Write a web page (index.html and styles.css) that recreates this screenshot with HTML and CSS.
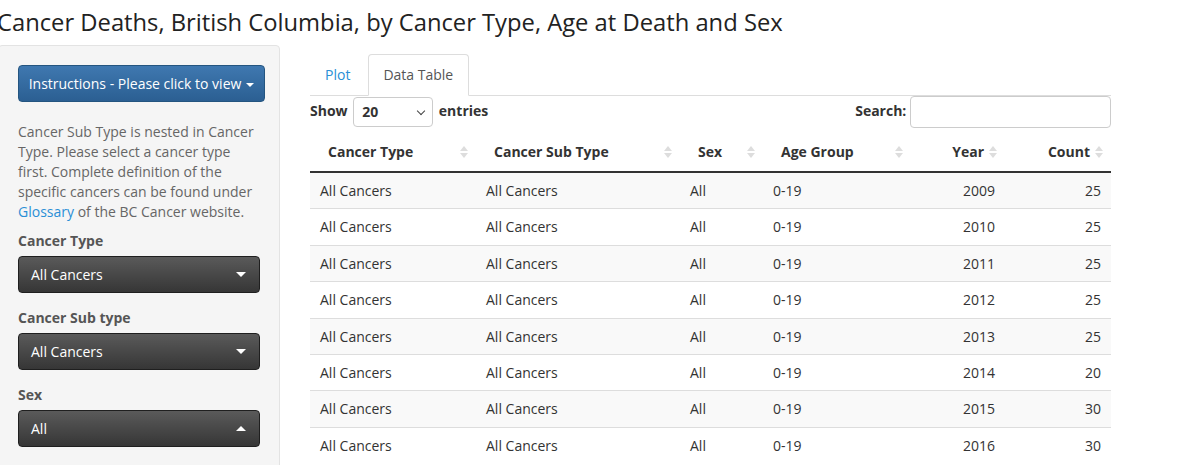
FILE: index.html
```html
<!DOCTYPE html>
<html lang="en">

<head>
    <meta charset="UTF-8">
    <meta name="viewport" content="width=device-width, initial-scale=1.0">
    <title>Cancer Deaths, British Columbia</title>
    <link rel="stylesheet" href="styles.css">
</head>

<body>
    <div class="page">
        <h2 class="title">Cancer Deaths, British Columbia, by Cancer Type, Age at Death and Sex</h2>

        <div class="layout">
            <!-- sidebar with filters -->
            <aside class="well">
                <button class="btn-primary">Instructions - Please click to view<span class="caret"></span></button>
                <p class="help">Cancer Sub Type is nested in Cancer Type. Please select a cancer type first. Complete definition of the specific cancers can be found under <a href="#">Glossary</a> of the BC Cancer website.</p>

                <div class="field">
                    <label>Cancer Type</label>
                    <div class="picker">All Cancers <span class="caret"></span></div>
                </div>
                <div class="field">
                    <label>Cancer Sub type</label>
                    <div class="picker">All Cancers <span class="caret"></span></div>
                </div>
                <div class="field">
                    <label>Sex</label>
                    <div class="picker">All <span class="caret up"></span></div>
                </div>
            </aside>

            <main class="content">
                <ul class="nav-tabs">
                    <li><a href="#">Plot</a></li>
                    <li class="active"><a href="#">Data Table</a></li>
                </ul>

                <div class="dt-top">
                    <div class="dt-length">Show <span class="len-select">20 <span class="chev"></span></span> entries</div>
                    <div class="dt-search">Search: <input type="text"></div>
                </div>

                <table class="data">
                    <colgroup>
                        <col style="width:166px">
                        <col style="width:204px">
                        <col style="width:83px">
                        <col style="width:148px">
                        <col style="width:94px">
                        <col style="width:106px">
                    </colgroup>
                    <thead>
                        <tr>
                            <th><div class="th">Cancer Type<span class="sort"></span></div></th>
                            <th><div class="th">Cancer Sub Type<span class="sort"></span></div></th>
                            <th><div class="th">Sex<span class="sort"></span></div></th>
                            <th><div class="th">Age Group<span class="sort"></span></div></th>
                            <th class="num"><div class="th">Year<span class="sort"></span></div></th>
                            <th class="num"><div class="th">Count<span class="sort"></span></div></th>
                        </tr>
                    </thead>
                    <tbody>
                        <tr><td>All Cancers</td><td>All Cancers</td><td>All</td><td>0-19</td><td class="num">2009</td><td class="num">25</td></tr>
                        <tr><td>All Cancers</td><td>All Cancers</td><td>All</td><td>0-19</td><td class="num">2010</td><td class="num">25</td></tr>
                        <tr><td>All Cancers</td><td>All Cancers</td><td>All</td><td>0-19</td><td class="num">2011</td><td class="num">25</td></tr>
                        <tr><td>All Cancers</td><td>All Cancers</td><td>All</td><td>0-19</td><td class="num">2012</td><td class="num">25</td></tr>
                        <tr><td>All Cancers</td><td>All Cancers</td><td>All</td><td>0-19</td><td class="num">2013</td><td class="num">25</td></tr>
                        <tr><td>All Cancers</td><td>All Cancers</td><td>All</td><td>0-19</td><td class="num">2014</td><td class="num">20</td></tr>
                        <tr><td>All Cancers</td><td>All Cancers</td><td>All</td><td>0-19</td><td class="num">2015</td><td class="num">30</td></tr>
                        <tr><td>All Cancers</td><td>All Cancers</td><td>All</td><td>0-19</td><td class="num">2016</td><td class="num">30</td></tr>
                    </tbody>
                </table>
            </main>
        </div>
    </div>
</body>

</html>
```

FILE: styles.css
```css
body {
    font-family: 'Open Sans', 'Liberation Sans', sans-serif;
    font-size: 14px;
    line-height: 20px;
    color: #333;
    margin: 0;
    background: #fff;
    overflow: hidden;
}

a {
    color: #2a8fd6;
    text-decoration: none;
}

.page {
    margin-left: -3px;
}

.title {
    font-size: 23.75px;
    font-weight: normal;
    line-height: 28px;
    margin: 8px 0 0;
    color: #222;
    white-space: nowrap;
}

.layout {
    display: flex;
    align-items: flex-start;
    margin-top: 9px;
    padding-left: 1px;
}

/* sidebar */
.well {
    width: 247px;
    min-height: 440px;
    padding: 19px 14px 19px 19px;
    background-color: #f5f5f5;
    border: 1px solid #e3e3e3;
    border-radius: 4px;
}

.btn-primary {
    display: block;
    width: 100%;
    height: 37px;
    font-family: inherit;
    font-size: 14px;
    color: #fff;
    background-image: linear-gradient(#3f78b0, #2b5f92);
    border: 1px solid #245580;
    border-radius: 4px;
    padding: 0 6px;
    text-align: center;
    white-space: nowrap;
}

.caret {
    display: inline-block;
    width: 0;
    height: 0;
    vertical-align: middle;
    border-top: 4px solid;
    border-right: 4px solid transparent;
    border-left: 4px solid transparent;
}

.btn-primary .caret {
    margin-left: 5px;
}

.caret.up {
    border-top: 0;
    border-bottom: 4px solid;
}

.help {
    max-width: 242px;
    color: #666;
    margin: 20px 0 9px;
}

.field {
    margin-bottom: 15px;
}

.field label {
    display: block;
    font-weight: bold;
    color: #555;
    margin-bottom: 5px;
}

.picker {
    display: flex;
    align-items: center;
    justify-content: space-between;
    height: 35px;
    margin-right: 5px;
    padding: 0 13px 0 12px;
    color: #fff;
    background-image: linear-gradient(#5a5a5a, #363636);
    border: 1px solid #1f1f1f;
    border-radius: 4px;
}

.picker .caret {
    border-width: 5px 5px 0;
}

.picker .caret.up {
    border-width: 0 5px 5px;
}

/* main panel */
.content {
    width: 801px;
    margin-left: 30px;
    padding-top: 9px;
}

.nav-tabs {
    display: flex;
    list-style: none;
    margin: 0;
    padding: 0;
    border-bottom: 1px solid #ddd;
}

.nav-tabs li {
    margin-right: 2px;
    margin-bottom: -1px;
}

.nav-tabs a {
    display: block;
    padding: 10px 15px 10px 14px;
    border: 1px solid transparent;
    border-radius: 4px 4px 0 0;
}

.nav-tabs .active a {
    color: #555;
    background: #fff;
    border-color: #ddd #ddd transparent;
}

.dt-top {
    display: flex;
    justify-content: space-between;
    align-items: center;
    height: 32px;
    font-weight: bold;
}

.len-select {
    display: inline-flex;
    align-items: center;
    justify-content: space-between;
    box-sizing: border-box;
    width: 80px;
    height: 30px;
    padding: 0 8px 0 8px;
    margin: 0 2px;
    border: 1px solid #ccc;
    border-radius: 4px;
    vertical-align: middle;
}

.chev {
    width: 5px;
    height: 5px;
    border-right: 1.5px solid #444;
    border-bottom: 1.5px solid #444;
    transform: rotate(45deg);
    margin-top: -3px;
}

.dt-search input {
    box-sizing: border-box;
    width: 201px;
    height: 32px;
    margin-left: 0;
    border: 1px solid #ccc;
    border-radius: 4px;
    vertical-align: middle;
}

table.data {
    width: 801px;
    table-layout: fixed;
    border-collapse: collapse;
    margin-top: 3px;
}

.data th {
    padding: 11px 8px 9px 18px;
    border-bottom: 2px solid #333;
    text-align: left;
}

.data .th {
    display: flex;
    align-items: center;
}

.data .sort {
    margin-left: auto;
    width: 0;
    height: 0;
    position: relative;
    border-left: 4px solid transparent;
    border-right: 4px solid transparent;
    border-bottom: 5px solid #ddd;
    margin-top: -7px;
}

.data .sort::after {
    content: '';
    position: absolute;
    left: -4px;
    top: 7px;
    border-left: 4px solid transparent;
    border-right: 4px solid transparent;
    border-top: 5px solid #ddd;
}

.data th.num .th {
    justify-content: flex-end;
}

.data th.num .sort {
    margin-left: 5px;
}

.data td {
    padding: 8px 10px;
    line-height: 19.4px;
    border-top: 1px solid #ddd;
}

.data tbody tr:first-child td {
    border-top: 0;
}

.data tbody tr:nth-child(odd) {
    background-color: #f9f9f9;
}

.data .num {
    text-align: right;
}
```
